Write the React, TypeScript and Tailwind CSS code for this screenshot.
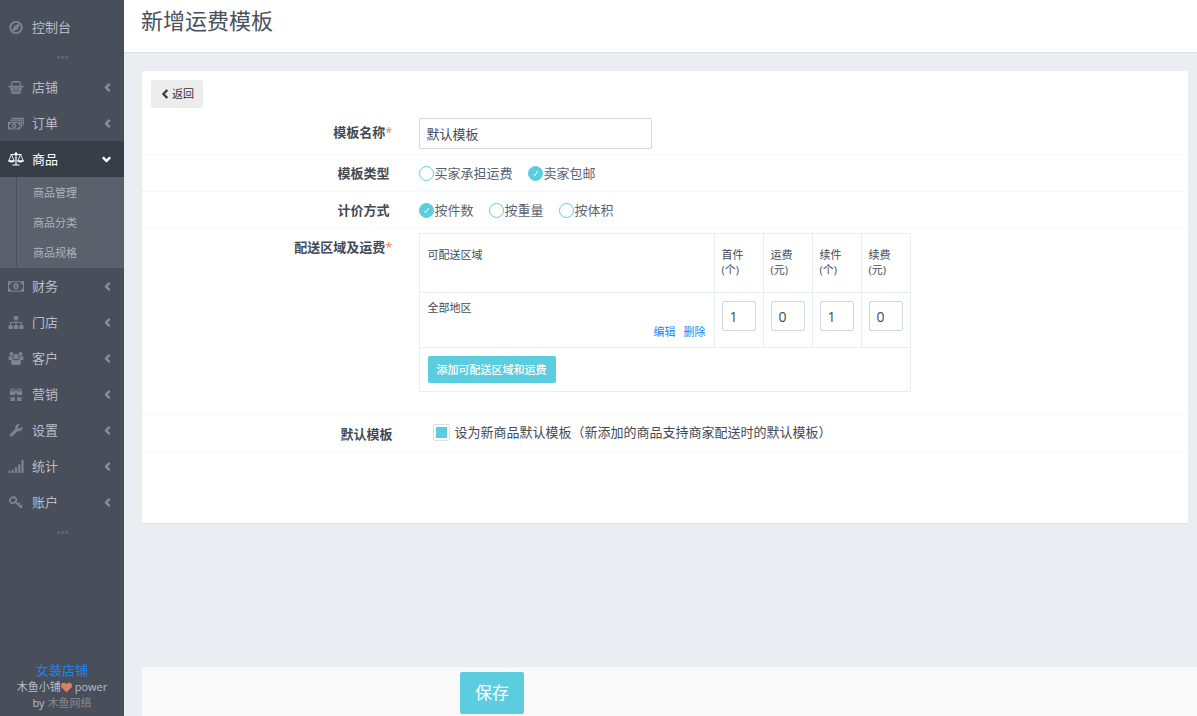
import { useState } from 'react'
import { FaAngleDown, FaAngleLeft, FaChevronLeft, FaHeart, FaRegCompass, FaWrench } from 'react-icons/fa'

const BasketIcon = ({ className }: any): JSX.Element => (
  <svg className={className} viewBox="0 0 15 13" fill="currentColor" aria-hidden="true">
    <path d="M5.500 0h4v1.800h-4z" />
    <path d="M5.500.9H3.800L2.500 5M9.500.9h1.700L12.500 5" stroke="currentColor" strokeWidth="1.200" fill="none" />
    <path d="M.7 4.800h13.600a.7.7 0 0 1 0 1.700H.7a.7.7 0 0 1 0-1.700z" />
    <path fillRule="evenodd" d="M1.700 6.500h11.600l-1.200 5.700a1 1 0 0 1-1 .8H3.900a1 1 0 0 1-1-.8zM4.300 7.500v4h.7v-4zM6.200 7.500v4h.7v-4zM8.100 7.500v4h.7v-4zM10 7.500v4h.7v-4z" />
  </svg>
);

const CashStackIcon = ({ className }: any): JSX.Element => (
  <svg className={className} viewBox="0 0 16 12" fill="none" stroke="currentColor" aria-hidden="true">
    <path d="M4 .9h11.400V8M2 2.700h11.400V10" strokeWidth="1.200" />
    <path fill="currentColor" fillRule="evenodd" stroke="none" d="M0 4.300h12.500V12H0zM2.800 5.400a1.800 1.800 0 0 1-1.700 1.700v2.100a1.800 1.800 0 0 1 1.700 1.700h6.900a1.800 1.800 0 0 1 1.700-1.700V7.100a1.800 1.800 0 0 1-1.700-1.700z" />
    <circle cx="6.200" cy="8.200" r="1.700" strokeWidth="1.300" />
  </svg>
);

const ScaleIcon = ({ className }: any): JSX.Element => (
  <svg className={className} viewBox="0 0 16 14" fill="none" stroke="currentColor" aria-hidden="true">
    <path d="M2.500 2.500h11M8 1v12M4.500 13h7" strokeWidth="1.200" />
    <circle cx="8" cy="1.600" r="1.300" fill="currentColor" stroke="none" />
    <path d="M3.500 2.500.9 8.500M3.500 2.500 6.100 8.500M12.500 2.500 9.900 8.500M12.500 2.500 15.100 8.500" strokeWidth=".9" />
    <path d="M0 8.300h7c0 3-7 3-7 0zM9 8.300h7c0 3-7 3-7 0z" fill="currentColor" stroke="none" />
  </svg>
);

const CashIcon = ({ className }: any): JSX.Element => (
  <svg className={className} viewBox="0 0 15 10" fill="currentColor" aria-hidden="true">
    <path fillRule="evenodd" d="M0 0h15v10H0zM3.200 1A2.200 2.200 0 0 1 1 3.200v3.600A2.200 2.200 0 0 1 3.200 9h8.600A2.200 2.200 0 0 1 14 6.800V3.200A2.200 2.200 0 0 1 11.800 1z" />
    <path fillRule="evenodd" d="M7.500 1.800C9 1.800 10 3.200 10 5S9 8.200 7.500 8.200 5 6.800 5 5s1-3.200 2.500-3.200zM6.600 3.600v.7h.5v1.900h-.6v.7h2v-.7h-.6V3.300h-.6z" />
  </svg>
);

const SitemapIcon = ({ className }: any): JSX.Element => (
  <svg className={className} viewBox="0 0 14 12" fill="currentColor" aria-hidden="true">
    <path d="M5 0h4v3.500H5zM0 8.500h4V12H0zM5 8.500h4V12H5zM10 8.500h4V12h-4z" />
    <path d="M7 3v6M2 9V6h10v3" fill="none" stroke="currentColor" />
  </svg>
);

const UsersIcon = ({ className }: any): JSX.Element => (
  <svg className={className} viewBox="0 0 15 13" fill="currentColor" aria-hidden="true">
    <circle cx="3" cy="1.900" r="1.900" />
    <circle cx="12" cy="1.900" r="1.900" />
    <circle cx="7.500" cy="4.400" r="2.600" />
    <path d="M0 6.700C0 4.800.5 3.900 1.300 3.900c1 .7 2 .8 2.900.4-.2 1.200.1 2 .7 2.800C4 7.100 3.300 7.500 2.900 8H1.300C.5 8 0 7.600 0 6.700zM15 6.700c0-1.900-.5-2.800-1.300-2.800-1 .7-2 .8-2.900.4.2 1.200-.1 2-.7 2.800.9 0 1.600.4 2 .9h1.600c.8 0 1.300-.4 1.300-1.300z" />
    <path d="M2.500 11c0-2.600.8-3.800 2.200-3.800 1.700 1.300 3.900 1.300 5.600 0 1.400 0 2.200 1.200 2.200 3.800 0 1.300-.8 2-2 2h-6c-1.200 0-2-.7-2-2z" />
  </svg>
);

const GiftIcon = ({ className }: any): JSX.Element => (
  <svg className={className} viewBox="0 0 14 14" fill="currentColor" aria-hidden="true">
    <path d="M3.200 3.500C.8 3.200 1.600.4 3.800.8 5.600 1.200 6.400 3 7 3.800 7.600 3 8.400 1.200 10.200.8c2.200-.4 3 2.400.6 2.700" fill="none" stroke="currentColor" strokeWidth="1.200" />
    <path d="M.4 3.500h13.200v4H8.500L7 4.800l-1.500 2.700H.4zM1.200 10h4.600v4H1.200zM8.200 10h4.600v4H8.200z" />
  </svg>
);

const SignalIcon = ({ className }: any): JSX.Element => (
  <svg className={className} viewBox="0 0 14 12" fill="currentColor" aria-hidden="true">
    <path d="M0 10h2v2H0zM3 9h2v3H3zM6 7h2v5H6zM9 4h2v8H9zM12 0h2v12h-2z" />
  </svg>
);

const KeyIcon = ({ className }: any): JSX.Element => (
  <svg className={className} viewBox="0 0 13 12" fill="none" stroke="currentColor" aria-hidden="true">
    <ellipse cx="3.800" cy="3.800" rx="3" ry="2.600" strokeWidth="1.600" transform="rotate(-30 3.800 3.800)" />
    <path d="M5.800 5.500 11.800 11.200M8 8.200 9.800 6.200M10 10.200 12 8.200" strokeWidth="1.600" />
  </svg>
);

const menu = [
  { name: '店铺', icon: BasketIcon },
  { name: '订单', icon: CashStackIcon },
  { name: '商品', icon: ScaleIcon, children: ['商品管理', '商品分类', '商品规格'] },
  { name: '财务', icon: CashIcon },
  { name: '门店', icon: SitemapIcon },
  { name: '客户', icon: UsersIcon },
  { name: '营销', icon: GiftIcon },
  { name: '设置', icon: FaWrench },
  { name: '统计', icon: SignalIcon },
  { name: '账户', icon: KeyIcon },
];

const Dots = (): JSX.Element => (
  <div className="flex h-6 items-center justify-center gap-px" aria-hidden="true">
    <i className="size-[3px] bg-[#5c636f]" />
    <i className="size-[3px] bg-[#5c636f]" />
    <i className="size-[3px] bg-[#5c636f]" />
  </div>
);

const Sidebar = (): JSX.Element => (
  <aside className="flex w-[124px] shrink-0 flex-col bg-[#484e5a] pt-[9px] text-[13px] text-[#b9bdc8]">
    <nav>
      <a href="#" className="flex h-9 items-center gap-2 px-2">
        <FaRegCompass className="h-[13px] w-4 stroke-current stroke-[20] text-[#858b97]" />
        控制台
      </a>
      <Dots />
      {menu.map(({ name, icon: Icon, children }) => (
        <div key={name}>
          <a href="#" className={children ? 'flex h-9 items-center gap-2 bg-[#383e48] px-2 text-white' : 'flex h-9 items-center gap-2 px-2'}>
            <Icon className={children ? 'h-[14px] w-4' : 'h-[13px] w-4 text-[#7e8490]'} />
            <span className="flex-1">{name}</span>
            {children
              ? <FaAngleDown className="mr-[3px] size-[13px] stroke-current stroke-[20]" />
              : <FaAngleLeft className="mr-0.5 size-[13px] stroke-current stroke-[16] text-[#8a909b]" />}
          </a>
          {children && (
            <ul className="bg-[#5a616c] pb-px text-[11px] text-[#aeb2bd]">
              {children.map((child) => (
                <li key={child} className="ml-4 flex h-[30px] items-center border-l border-[#484e5a] pt-0.5 pl-4">
                  <a href="#">{child}</a>
                </li>
              ))}
            </ul>
          )}
        </div>
      ))}
      <Dots />
    </nav>
    <footer className="mt-auto pb-[5px] text-center text-[11px] leading-4">
      <a href="#" className="block text-[13px] leading-[18px] text-[#1b84f5]">女装店铺</a>
      <p className="flex items-center justify-center">
        木鱼小铺<FaHeart className="mr-[3px] size-[11px] text-[#de7f5c]" />power
      </p>
      <p className="flex items-center justify-center gap-[3px]">
        by<a href="#" className="text-[#888888]">木鱼网络</a>
      </p>
    </footer>
  </aside>
);

const Radio = ({ name, label, checked, onChange }: any): JSX.Element => (
  <label className="flex items-center gap-px text-[#5c6370]">
    <span className="grid size-[15px] place-items-center">
      <input
        type="radio"
        name={name}
        checked={checked}
        onChange={onChange}
        className="col-start-1 row-start-1 size-[15px] appearance-none rounded-full border border-[#5ccdde] bg-white checked:bg-[#5ccdde]"
      />
      {checked && (
        <svg className="pointer-events-none col-start-1 row-start-1 size-[7px]" viewBox="0 0 7 7" fill="none" stroke="white" aria-hidden="true">
          <path d="M1.200 4 2.800 5.800 5.500 1" />
        </svg>
      )}
    </span>
    {label}
  </label>
);

const RadioGroup = ({ name, options, initial }: any): JSX.Element => {
  const [value, setValue] = useState(initial);

  return (
    <div role="radiogroup" aria-labelledby={name} className="flex gap-[15px]">
      {options.map((option: string) => (
        <Radio key={option} name={name} label={option} checked={value === option} onChange={() => setValue(option)} />
      ))}
    </div>
  );
};

const labelClass = 'w-1/4 shrink-0 text-right font-bold text-[#434a54]';
const rowClass = 'flex border-b border-dotted border-[#f0f0f0]';

const Required = (): JSX.Element => <span className="font-normal text-[#e67e5a]">*</span>;

const fees = [
  { title: '首件', unit: '(个)', value: '1' },
  { title: '运费', unit: '(元)', value: '0' },
  { title: '续件', unit: '(个)', value: '1' },
  { title: '续费', unit: '(元)', value: '0' },
];

const RegionTable = (): JSX.Element => (
  <table className="w-[492px] table-fixed border-collapse text-left text-[11px] leading-[15px] text-[#434a54]">
    <thead>
      <tr className="h-[59px]">
        <th className="border border-[#eaedf1] px-2 pt-[13px] align-top font-normal">可配送区域</th>
        {fees.map((fee) => (
          <th key={fee.title} className="w-[49px] border border-[#eaedf1] px-[7px] pt-[13px] align-top font-normal">
            {fee.title}<br />{fee.unit}
          </th>
        ))}
      </tr>
    </thead>
    <tbody>
      <tr className="h-[55px]">
        <td className="border border-[#eaedf1] px-2 pt-[7px] align-top">
          全部地区
          <div className="mt-[9px] flex justify-end gap-2 text-[#1b84f5]">
            <a href="#">编辑</a>
            <a href="#">删除</a>
          </div>
        </td>
        {fees.map((fee) => (
          <td key={fee.title} className="border border-[#eaedf1] px-[7px] pt-2 align-top">
            <input
              type="text"
              aria-label={fee.title + fee.unit}
              defaultValue={fee.value}
              className="block h-[30px] w-full rounded-[2px] border border-[#d4d6d8] pl-[7px] text-sm"
            />
          </td>
        ))}
      </tr>
      <tr className="h-11">
        <td colSpan={5} className="border border-[#eaedf1] px-2">
          <button type="button" className="block h-[27px] rounded-[2px] bg-[#5ccdde] px-[9px] font-medium text-white">
            添加可配送区域和运费
          </button>
        </td>
      </tr>
    </tbody>
  </table>
);

const App = (): JSX.Element => {
  const [isDefault, setIsDefault] = useState(true);

  return (
    <div className="flex min-h-screen bg-[#eaedf1] font-['Open_Sans','Noto_Sans_CJK_SC',sans-serif] text-[13px] leading-5">
      <Sidebar />
      <main className="flex min-w-0 flex-1 flex-col">
        <header className="h-[53px] border-b border-[#dae0e8] bg-white px-[17px] pt-1">
          <h1 className="text-[22px] leading-8 text-[#4a515d]">新增运费模板</h1>
        </header>

        <form id="template" className="mt-[18px] mr-[9px] mb-8 ml-[18px] rounded-[2px] border-b border-[#dae0e8] bg-white pt-[9px] pb-[71px]">
          <button type="button" className="ml-[9px] flex h-7 items-center gap-0.5 rounded-[2px] bg-[#ececec] px-[9px] text-[11px] text-[#333333]">
            <FaChevronLeft className="size-[10px] stroke-current stroke-[40]" />
            返回
          </button>

          <div className={`${rowClass} pt-[10px] pb-[5px]`}>
            <label htmlFor="name" className={`${labelClass} pt-1 pr-[11px]`}>模板名称<Required /></label>
            <div className="pl-[15px]">
              <input
                type="text"
                id="name"
                defaultValue="默认模板"
                className="block h-[31px] w-[233px] rounded-[2px] border border-[#d4d6d8] px-[7px] text-[#434a54]"
              />
            </div>
          </div>

          <div className={`${rowClass} py-2`}>
            <div id="type" className={`${labelClass} pr-[14px]`}>模板类型</div>
            <div className="pl-[15px]">
              <RadioGroup name="type" options={['买家承担运费', '卖家包邮']} initial="卖家包邮" />
            </div>
          </div>

          <div className={`${rowClass} py-2`}>
            <div id="method" className={`${labelClass} pr-[14px]`}>计价方式</div>
            <div className="pl-[15px]">
              <RadioGroup name="method" options={['按件数', '按重量', '按体积']} initial="按件数" />
            </div>
          </div>

          <div className={`${rowClass} pt-1 pb-[22px]`}>
            <div className={`${labelClass} pt-1 pr-[11px]`}>配送区域及运费<Required /></div>
            <div className="pl-[15px]">
              <RegionTable />
            </div>
          </div>

          <div className={`${rowClass} py-[7px]`}>
            <div className={`${labelClass} pt-0.5 pr-[11px]`}>默认模板</div>
            <label className="flex items-center gap-[5px] self-start pl-[29px] text-[#434a54]">
              <input
                type="checkbox"
                checked={isDefault}
                onChange={() => setIsDefault(!isDefault)}
                className="size-[17px] appearance-none rounded-[2px] border border-[#dae0e8] bg-clip-content p-[2px] checked:bg-[#5ccdde]"
              />
              设为新商品默认模板（新添加的商品支持商家配送时的默认模板）
            </label>
          </div>
        </form>

        <div className="mt-auto ml-[18px] h-[49px] bg-[#f9f9f9] pt-[5px] pl-[318px]">
          <button type="submit" form="template" className="h-[42px] rounded-[2px] bg-[#5ccdde] px-[15px] text-[17px] text-white">
            保存
          </button>
        </div>
      </main>
    </div>
  )
};

export default App;
